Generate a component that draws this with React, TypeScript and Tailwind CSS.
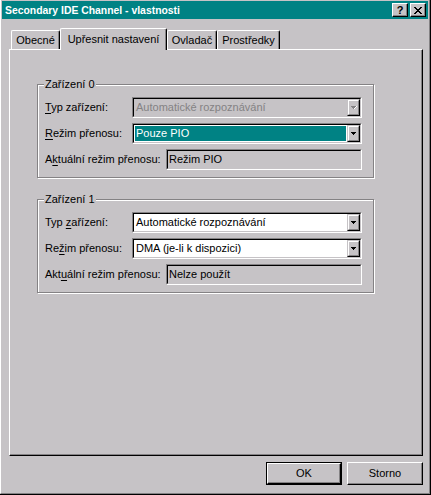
import React from "react";

const FONT = "font-['Liberation_Sans',Arial,sans-serif]";

function Arrow({ disabled }: { disabled?: boolean }) {
  const c = disabled ? "#848284" : "#000";
  return (
    <svg width="6" height="4" viewBox="0 0 6 4" shapeRendering="crispEdges" className="block">
      {disabled && (
        <g fill="#fff">
          <rect x="3" y="2" width="1" height="1" />
          <rect x="4" y="1" width="1" height="1" />
          <rect x="5" y="0" width="1" height="1" />
        </g>
      )}
      <rect x="0" y="0" width="5" height="1" fill={c} />
      <rect x="1" y="1" width="3" height="1" fill={c} />
      <rect x="2" y="2" width="1" height="1" fill={c} />
    </svg>
  );
}

function Sunken({
  width,
  bg,
  children,
}: {
  width: string;
  bg: string;
  children: React.ReactNode;
}) {
  return (
    <div
      className={`h-[21px] ${width} border border-t-[#848284] border-l-[#848284] border-r-white border-b-white`}
    >
      <div
        className={`h-full flex border border-t-black border-l-black border-r-[#c6c3c6] border-b-[#c6c3c6] ${bg}`}
      >
        {children}
      </div>
    </div>
  );
}

function DropButton({ disabled }: { disabled?: boolean }) {
  return (
    <div className="w-[13px] h-full shrink-0 border border-t-[#c6c3c6] border-l-[#c6c3c6] border-r-black border-b-black bg-[#c6c3c6]">
      <div className="h-full flex items-center justify-center border border-t-white border-l-white border-r-[#848284] border-b-[#848284]">
        <Arrow disabled={disabled} />
      </div>
    </div>
  );
}

function Combo({
  text,
  disabled,
  selected,
}: {
  text: string;
  disabled?: boolean;
  selected?: boolean;
}) {
  return (
    <Sunken width="w-[230px]" bg={disabled ? "bg-[#c6c3c6]" : "bg-white"}>
      <div className="flex-1 p-px flex">
        <div
          className={`flex-1 flex items-center pl-[1px] leading-[13px] ${
            selected ? "bg-[#008284] text-white" : disabled ? "text-[#848284]" : "text-black"
          }`}
        >
          {text}
        </div>
      </div>
      <DropButton disabled={disabled} />
    </Sunken>
  );
}

function Static({ text }: { text: string }) {
  return (
    <Sunken width="w-[196px]" bg="bg-[#c6c3c6]">
      <div className="flex-1 flex items-center pl-[1px] leading-[13px]">{text}</div>
    </Sunken>
  );
}

function Row({ label, children }: { label: React.ReactNode; children: React.ReactNode }) {
  return (
    <div className="h-[21px] flex items-center justify-between pl-[7px] pr-[11px]">
      <div className="leading-[13px]">{label}</div>
      {children}
    </div>
  );
}

function Group({ title, children, className }: { title: string; children: React.ReactNode; className?: string }) {
  return (
    <div
      className={`relative w-[337px] ml-[27px] border border-[#848284] shadow-[inset_1px_1px_#fff,1px_1px_#fff] pt-[12px] pb-[7px] flex flex-col gap-[5px] ${className ?? ""}`}
    >
      <div className="absolute top-[-7px] left-[6px] px-[1px] bg-[#c6c3c6] leading-[13px]">{title}</div>
      {children}
    </div>
  );
}

function U({ children }: { children: React.ReactNode }) {
  return <span className="underline underline-offset-[2px]">{children}</span>;
}

function Tab({ label, selected, w }: { label: string; selected?: boolean; w: string }) {
  return (
    <div
      className={`${w} ${
        selected ? "h-[22px] -mb-px relative z-10 pt-[2px]" : "h-[19px]"
      } flex items-center justify-center bg-[#c6c3c6] border-t border-l border-r border-t-white border-l-white border-r-black rounded-tl-[2px] rounded-tr-[2px] shadow-[inset_-1px_0_#848284] leading-[13px]`}
    >
      <span className={selected ? "-mt-[3px]" : ""}>{label}</span>
    </div>
  );
}

function Btn({ label, def }: { label: string; def?: boolean }) {
  if (def) {
    return (
      <div className="w-[76px] h-[23px] border border-black">
        <div className="h-full border border-t-white border-l-white border-r-black border-b-black shadow-[inset_-1px_-1px_#848284] flex items-center justify-center leading-[13px]">
          {label}
        </div>
      </div>
    );
  }
  return (
    <div className="w-[76px] h-[23px] border border-t-white border-l-white border-r-black border-b-black shadow-[inset_-1px_-1px_#848284] flex items-center justify-center leading-[13px]">
      {label}
    </div>
  );
}

function CapButton({ children }: { children: React.ReactNode }) {
  return (
    <div className="w-[16px] h-[14px] bg-[#c6c3c6] border border-t-white border-l-white border-r-black border-b-black shadow-[inset_-1px_-1px_#848284] flex items-center justify-center">
      {children}
    </div>
  );
}

export default function App() {
  return (
    <div className={`w-[431px] h-[495px] bg-[#c6c3c6] text-black text-[11px] ${FONT} border-r border-b border-r-black border-b-black`}>
      <div className="h-full flex flex-col border-l border-r border-b border-l-white border-r-[#848284] border-b-[#848284] px-px pt-px">
        {/* title bar */}
        <div className="h-[18px] bg-[#008284] flex items-center justify-between pl-[3px] pr-[2px]">
          <span className="text-white font-bold text-[10.4px] leading-[13px]">
            Secondary IDE Channel - vlastnosti
          </span>
          <div className="flex gap-[2px]">
            <CapButton>
              <span className="font-bold text-[11px] leading-[10px] text-black">?</span>
            </CapButton>
            <CapButton>
              <svg width="8" height="7" viewBox="0 0 8 7" shapeRendering="crispEdges" className="block">
                <g fill="#000">
                  <rect x="0" y="0" width="2" height="1" />
                  <rect x="6" y="0" width="2" height="1" />
                  <rect x="1" y="1" width="2" height="1" />
                  <rect x="5" y="1" width="2" height="1" />
                  <rect x="2" y="2" width="4" height="1" />
                  <rect x="3" y="3" width="2" height="1" />
                  <rect x="2" y="4" width="4" height="1" />
                  <rect x="1" y="5" width="2" height="1" />
                  <rect x="5" y="5" width="2" height="1" />
                  <rect x="0" y="6" width="2" height="1" />
                  <rect x="6" y="6" width="2" height="1" />
                </g>
              </svg>
            </CapButton>
          </div>
        </div>

        {/* tabs */}
        <div className="ml-[7px] w-[414px] mt-[9px]">
          <div className="h-[21px] flex items-end pl-[2px]">
            <Tab label="Obecné" w="w-[49px]" />
            <Tab label="Upřesnit nastavení" w="w-[107px]" selected />
            <Tab label="Ovladač" w="w-[50px]" />
            <Tab label="Prostředky" w="w-[63px]" />
          </div>
          <div className="h-[407px] border border-t-white border-l-white border-r-black border-b-black shadow-[inset_-1px_-1px_#848284] pt-[34px]">
            <Group title="Zařízení 0">
              <Row label={<><U>T</U>yp zařízení:</>}>
                <Combo text="Automatické rozpoznávání" disabled />
              </Row>
              <Row label={<><U>R</U>ežim přenosu:</>}>
                <Combo text="Pouze PIO" selected />
              </Row>
              <Row label={<>A<U>k</U>tuální režim přenosu:</>}>
                <Static text="Režim PIO" />
              </Row>
            </Group>
            <Group title="Zařízení 1" className="mt-[21px]">
              <Row label={<>Typ <U>z</U>ařízení:</>}>
                <Combo text="Automatické rozpoznávání" />
              </Row>
              <Row label={<>Re<U>ž</U>im přenosu:</>}>
                <Combo text="DMA (je-li k dispozici)" />
              </Row>
              <Row label={<>Akt<U>u</U>ální režim přenosu:</>}>
                <Static text="Nelze použít" />
              </Row>
            </Group>
          </div>
          <div className="mt-[6px] flex justify-end gap-[5px]">
            <Btn label="OK" def />
            <Btn label="Storno" />
          </div>
        </div>
      </div>
    </div>
  );
}
